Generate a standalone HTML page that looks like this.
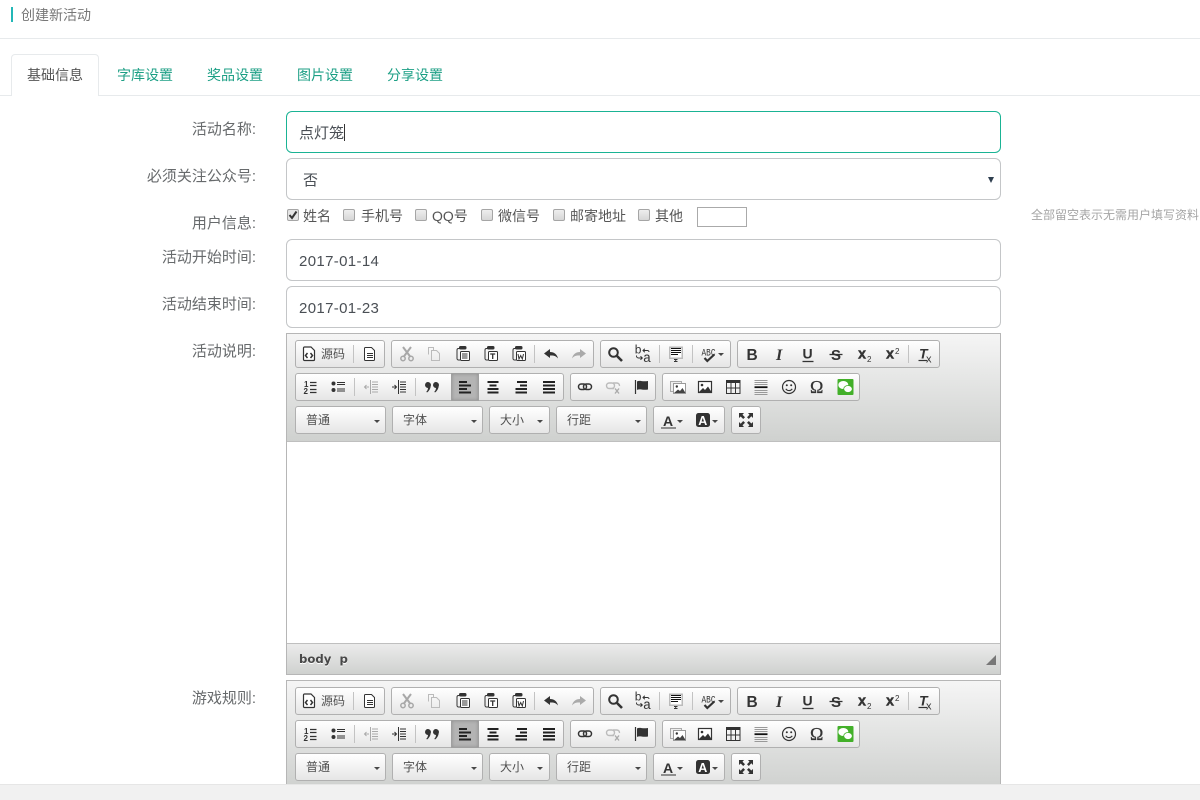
<!DOCTYPE html>
<html lang="zh">
<head>
<meta charset="utf-8">
<title>创建新活动</title>
<style>
html,body{margin:0;padding:0;width:1200px;height:800px;overflow:hidden;background:#fff}
body{position:relative;font-family:"Liberation Sans","Noto Sans CJK SC",sans-serif;font-size:14px;color:#676a6c}
#page{position:absolute;left:0;top:0;width:1200px;height:800px;overflow:hidden}
.t{position:absolute;white-space:nowrap;line-height:20px}
.l{position:absolute;left:56px;width:200px;text-align:right;white-space:nowrap;line-height:20px;color:#676a6c;font-size:15px}
.box{position:absolute;left:286px;width:715px;height:42px;box-sizing:border-box;border:1px solid #c4c6c8;border-radius:6px;background:#fff;color:#4a4f55;font-size:15px;line-height:43px;padding-left:12px;overflow:hidden}
.cb{position:absolute;width:12px;height:12px;box-sizing:border-box;border:1px solid #a5a5a5;border-radius:2px;background:linear-gradient(#eee,#d6d6d6);top:209px}
.tb{position:absolute;left:0;width:1200px;height:0}
.ed{position:absolute;left:286px;top:333px;width:715px;height:342px;box-sizing:border-box;border:1px solid #b6b6b6;background:#fff}
.e2{height:104px;border-bottom:0;overflow:hidden}
.top{position:absolute;left:0;top:0;width:713px;height:107px;background:linear-gradient(#f5f5f5,#cfd1cf);border-bottom:1px solid #bfbfbf}
.bot{position:absolute;left:0;top:309px;width:713px;height:31px;background:linear-gradient(#ebebeb,#cfd1cf);border-top:1px solid #bfbfbf;box-sizing:border-box}
.g{position:absolute;display:block;height:28px;box-sizing:border-box;border:1px solid #b0b0b0;border-radius:3px;background:linear-gradient(#fff,#e6e6e6)}
.a{position:absolute;left:451px;top:373px;width:28px;height:28px;box-sizing:border-box;background:#b4b4b4;border:1px solid #a0a0a0;box-shadow:inset 0 0 3px #8f8f8f}
.s{position:absolute;width:1px;height:18px;background:#c3c3c3}
.c{position:absolute;font-size:12px;line-height:20px;color:#505050;white-space:nowrap}
.ar{position:absolute;width:0;height:0;border:3px solid transparent;border-top-color:#474747;border-bottom:0}
.path{position:absolute;left:299px;top:651px;font-family:"DejaVu Sans",sans-serif;font-weight:bold;font-size:11.7px;line-height:16px;color:#484848;text-shadow:0 1px 0 #fff;white-space:pre}
svg.ic{position:absolute;left:0;top:0;overflow:hidden}
#foot{position:absolute;left:0;top:784px;width:1200px;height:16px;background:#f1f1f1;border-top:1px solid #e6e6e6;box-sizing:border-box;z-index:9}
</style>
</head>
<body>
<div id="page">

<svg width="0" height="0" style="position:absolute">
<defs>
<g id="clip"><rect x="4.500" y="0.500" width="6.500" height="2.500" rx="1" fill="#333"/><path d="M4.500 2.500H3.500A1.500 1.500 0 0 0 2 4v8.500A1.500 1.500 0 0 0 3.500 14H5" fill="none" stroke="#333"/><rect x="5.500" y="5.500" width="9" height="9" rx="1" fill="#fff" stroke="#333"/></g>
<g id="icons" fill="none" stroke="#333">
<g transform="translate(301,346)"><path d="M3.500 1h6.500l3.500 3.500v9a1 1 0 0 1-1 1h-9a1 1 0 0 1-1-1v-11.500a1 1 0 0 1 1-1z" fill="#fff" stroke-width="1.200"/><path d="M6.500 7 4.500 9.500l2 2.500M9.500 7l2 2.500-2 2.500" stroke-width="1.500"/></g>
<g transform="translate(362,346)"><path d="M3.500 1.500h6l3 3v9a1 1 0 0 1-1 1h-8a1 1 0 0 1-1-1v-11a1 1 0 0 1 1-1z" fill="#fff"/><path d="M5 7.500h6M5 9.500h6M5 11.500h6"/></g>
<g transform="translate(399,346)" stroke="#a8a8a8"><path d="M4 1l7.500 10M12 1 4.500 11" stroke-width="2"/><circle cx="4" cy="12.500" r="2.200" stroke-width="1.500"/><circle cx="12" cy="12.500" r="2.200" stroke-width="1.500"/></g>
<g transform="translate(426,346)" stroke="#bbb"><path d="M2.500 8.500v-7h5v3M5.500 4.500h5l3 3v7h-8z"/></g>
<g transform="translate(455,346)"><use href="#clip"/><path d="M7 8h5.500M7 10h5.500M7 12h5.500"/></g>
<g transform="translate(483,346)"><use href="#clip"/><path d="M7.200 8h5M9.700 8v5" stroke-width="1.300"/></g>
<g transform="translate(511,346)"><use href="#clip"/><path d="M7 8l1 5 1.700-3.500 1.600 3.500 1.200-5" stroke-width="1"/></g>
<path transform="translate(543,346)" d="M1 7.500 7 3v3c4 0 7 2 8 6.500-2-2.500-4-3.200-8-3V12z" fill="#333" stroke="none"/>
<path transform="translate(587,346) scale(-1,1)" d="M1 7.500 7 3v3c4 0 7 2 8 6.500-2-2.500-4-3.200-8-3V12z" fill="#aaa" stroke="none"/>
<g transform="translate(607,346)"><circle cx="6.500" cy="6.500" r="4.300" stroke-width="2"/><path d="M10 10l5 5" stroke-width="2.600"/></g>
<g transform="translate(635,346)"><text x="-0.500" y="7.500" font-family="Liberation Mono" font-size="12" fill="#333" stroke="none">b</text><text x="8" y="16" font-family="Liberation Mono" font-size="13.500" fill="#333" stroke="none">a</text><path d="M8 4.500h4.500a1.500 1.500 0 0 1 1.500 1.500M9.800 2.800 8 4.500l1.800 1.700M1.500 9.500v.5a2 2 0 0 0 2 2H7M5.500 10.300 7.300 12l-1.800 1.700"/></g>
<g transform="translate(668,346)"><rect x="1" y="0.500" width="14" height="12.500" fill="#bbb" stroke="none"/><rect x="2.500" y="2" width="11" height="9.500" fill="#fff" stroke="none"/><path d="M3 2.500h10M3 4.500h10M3 6.500h10M3 8.500h7" stroke="#111"/><path d="M6 13.500h3.500M7.700 13.500v2.300M6 15.500h3.500"/></g>
<g transform="translate(700,346)"><text x="1.500" y="9.500" font-family="Liberation Mono" font-size="10" fill="#333" stroke="none" textLength="14" lengthAdjust="spacingAndGlyphs">ABC</text><path d="M4.500 12l2.800 3 7-6.500" stroke-width="2.200"/></g>
<text x="746.500" y="360" font-family="Liberation Sans" font-weight="bold" font-size="15.500" fill="#333" stroke="none">B</text>
<text x="776" y="360" font-family="Liberation Serif" font-style="italic" font-weight="bold" font-size="16" fill="#333" stroke="none">I</text>
<text x="802.500" y="358.500" font-family="Liberation Sans" font-weight="bold" font-size="14" fill="#333" stroke="none">U</text><path d="M802.500 361.500h11" stroke-width="1.300"/>
<text x="831" y="360" font-family="Liberation Sans" font-weight="bold" font-size="15" fill="#333" stroke="none">S</text><path d="M829.500 354.500h13" stroke-width="1.300"/>
<text x="858" y="358.500" font-family="Liberation Sans" font-weight="bold" font-size="14.500" fill="#333" stroke="#333" stroke-width="0.400">x</text><text x="867" y="362" font-family="Liberation Sans" font-size="8" fill="#333" stroke="none">2</text>
<text x="886" y="358.500" font-family="Liberation Sans" font-weight="bold" font-size="14.500" fill="#333" stroke="#333" stroke-width="0.400">x</text><text x="895" y="354" font-family="Liberation Sans" font-size="8" fill="#333" stroke="none">2</text>
<text x="919" y="358.500" font-family="Liberation Sans" font-style="italic" font-weight="bold" font-size="14" fill="#333" stroke="none">T</text><path d="M918.500 360.500h8.500" stroke-width="1.200"/><text x="926" y="362.500" font-family="Liberation Sans" font-size="11" fill="#333" stroke="none">x</text>

<g transform="translate(302,379)"><text x="2" y="8" font-family="Liberation Sans" font-weight="bold" font-size="8" fill="#333" stroke="none">1</text><text x="1.500" y="15" font-family="Liberation Sans" font-weight="bold" font-size="8" fill="#333" stroke="none">2</text><path d="M8 3.500h6.500M8 6.500h6.500M8 10.500h6.500M8 13.500h6.500" stroke-width="1.200"/></g>
<g transform="translate(330,379)"><circle cx="3.500" cy="4.500" r="2" fill="#333" stroke="none"/><circle cx="3.500" cy="11" r="2" fill="#333" stroke="none"/><path d="M7 3.500h8M7 5.500h8M7 10h8M7 12h8" stroke-width="1.100"/></g>
<g transform="translate(363,379)" stroke="#aaa"><path d="M7.500 1v14M9 3h6M9 5.500h6M9 8h6M9 10.500h6M9 13h6M6 8H1.500M3.500 6 1.500 8l2 2"/></g>
<g transform="translate(391,379)"><path d="M7.500 1v14M9 3h6M9 5.500h6M9 8h6M9 10.500h6M9 13h6M1 8h4.500M3.500 6l2 2-2 2"/></g>
<g transform="translate(424,380)" fill="#333" stroke="none"><path d="M1 5a3 3 0 1 1 5.700 1.300c-.4 2.700-1.700 5-3.700 6.200l-.7-.7c1-1 1.500-2 1.700-3.800A3 3 0 0 1 1 5z"/><path d="M9 5a3 3 0 1 1 5.700 1.300c-.4 2.700-1.700 5-3.700 6.200l-.7-.7c1-1 1.500-2 1.700-3.800A3 3 0 0 1 9 5z"/></g>
<g stroke="#222" stroke-width="2"><path d="M459 382h8M459 385.500h12M459 389h8M459 392.500h12"/><path d="M487.500 382h11M489.500 385.500h7M487.500 389h11M487.500 392.500h11"/><path d="M517 382h10M520 385.500h7M515.500 389h11.500M515.500 392.500h11.500"/><path d="M543 382h12M543 385.500h12M543 389h12M543 392.500h12"/></g>
<g transform="translate(577,379)" stroke-width="1.500"><rect x="1.500" y="5" width="8" height="5.500" rx="2.700"/><rect x="6.500" y="5" width="8" height="5.500" rx="2.700"/></g>
<g transform="translate(605,379)" stroke="#bbb" stroke-width="1.400"><rect x="1.500" y="4" width="8" height="5.500" rx="2.700"/><path d="M8 4h4a2.700 2.700 0 0 1 2.500 3M7 9.500h2"/><path d="M10 9.500l4 5M14 9.500l-4 5" stroke="#aaa"/></g>
<g transform="translate(634,379)"><path d="M1.500 1v14" stroke-width="1.200"/><path d="M3 2.500c3-1.500 5 .5 11-.5v8.500c-5 1-8-1-11 .5z" fill="#333" stroke="none"/></g>
<g transform="translate(670,379)"><rect x="0.500" y="2.500" width="11" height="10" fill="#eee" stroke="#aaa"/><rect x="3.500" y="4.500" width="12" height="10" fill="#fff" stroke="#999"/><circle cx="6.800" cy="7.500" r="1.200" fill="#333" stroke="none"/><path d="M4 14l4-3.500 2 1.500 2.500-3 3 5z" fill="#444" stroke="none"/></g>
<g transform="translate(697,379)"><rect x="1.500" y="2.500" width="13" height="11" fill="#fff" stroke-width="1.200"/><circle cx="5" cy="6" r="1.300" fill="#333" stroke="none"/><path d="M2 13l4-4 2 2 3-3.500 3.500 5.500z" fill="#333" stroke="none"/></g>
<g transform="translate(725,379)"><rect x="1" y="1" width="14.500" height="2.800" fill="#333" stroke="none"/><path d="M1.500 3.500h13.500v11H1.500zM1.500 9h13.500M6 3.500v11M10.500 3.500v11"/></g>
<g transform="translate(753,379)"><path d="M1.500 1.500h13M1.500 3.500h13M1.500 5.500h13M1.500 11.500h13M1.500 13.500h13M1.500 15.500h13" stroke="#999"/><path d="M1.500 8.200h13" stroke="#111" stroke-width="1.800"/></g>
<g transform="translate(781,379)"><circle cx="8" cy="8" r="6.500" stroke-width="1.200"/><circle cx="5.800" cy="6.300" r="1" fill="#333" stroke="none"/><circle cx="10.200" cy="6.300" r="1" fill="#333" stroke="none"/><path d="M4.800 9.800c1.500 2.400 5 2.400 6.400 0" stroke-width="1.100"/></g>
<text x="810" y="393" font-family="Liberation Serif" font-size="18" fill="#333" stroke="#333" stroke-width="0.300">Ω</text>
<g transform="translate(837,379)"><rect x="0.500" y="0" width="16" height="16" rx="1" fill="#43b02a" stroke="none"/><ellipse cx="6.300" cy="6" rx="5" ry="4" fill="#fff" stroke="none"/><ellipse cx="11" cy="10" rx="4.300" ry="3.500" fill="#fff" stroke="#43b02a" stroke-width="0.800"/></g>

<text x="663" y="426" font-family="Liberation Sans" font-weight="bold" font-size="14" fill="#333" stroke="none">A</text><path d="M661 428h15" stroke="#777" stroke-width="1.600"/>
<rect x="696" y="413" width="14" height="14" rx="2.500" fill="#333" stroke="none"/><text x="698.200" y="425" font-family="Liberation Sans" font-weight="bold" font-size="12.500" fill="#fff" stroke="none">A</text>
<g transform="translate(738,412)" fill="#333" stroke="none"><path d="M1 1h5L4.500 2.700 7 5.200 5.200 7 2.700 4.500 1 6zM15 1v5l-1.700-1.700L10.800 7 9 5.200l2.500-2.500L10 1zM1 15v-5l1.700 1.700L5.200 9 7 10.800l-2.500 2.500L6 15zM15 15h-5l1.500-1.700L9 10.800 10.800 9l2.500 2.500L15 10z"/></g>
</g>
</defs>
</svg>

<!-- page header -->
<div style="position:absolute;left:11px;top:7px;width:2px;height:15px;background:#23b7b7"></div>
<div class="t" style="left:21px;top:5px;font-size:14px;color:#777">创建新活动</div>
<div style="position:absolute;left:0;top:38px;width:1200px;height:1px;background:#e7eaec"></div>

<!-- tabs -->
<div style="position:absolute;left:0;top:95px;width:1200px;height:1px;background:#e7eaec"></div>
<div style="position:absolute;left:11px;top:54px;width:88px;height:42px;box-sizing:border-box;border:1px solid #e7eaec;border-bottom:0;border-radius:4px 4px 0 0;background:#fff"></div>
<div class="t" style="left:27px;top:65px;color:#555">基础信息</div>
<div class="t" style="left:117px;top:65px;color:#1c9f85">字库设置</div>
<div class="t" style="left:207px;top:65px;color:#1c9f85">奖品设置</div>
<div class="t" style="left:297px;top:65px;color:#1c9f85">图片设置</div>
<div class="t" style="left:387px;top:65px;color:#1c9f85">分享设置</div>

<!-- form -->
<div class="l" style="top:120px">活动名称:</div>
<div class="box" style="top:111px;border-color:#1ab394">点灯笼<span style="display:inline-block;width:1px;height:17px;background:#333;vertical-align:-3px"></span></div>

<div class="l" style="top:167px">必须关注公众号:</div>
<div class="box" style="top:158px;padding-left:16px">否</div>
<div style="position:absolute;left:988px;top:177px;width:0;height:0;border:3.500px solid transparent;border-top:6px solid #2f3f4f;border-bottom:0"></div>

<div class="l" style="top:214px">用户信息:</div>
<div class="cb" style="left:287px;background:#e4e4e4"></div>
<svg width="12" height="12" style="position:absolute;left:287px;top:209px"><path d="M2.500 6l2.500 3 4.500-6.500" fill="none" stroke="#333" stroke-width="2"/></svg>
<div class="t" style="left:303px;top:206px;color:#555">姓名</div>
<div class="cb" style="left:343px"></div>
<div class="t" style="left:361px;top:206px;color:#555">手机号</div>
<div class="cb" style="left:415px"></div>
<div class="t" style="left:432px;top:206px;color:#555">QQ号</div>
<div class="cb" style="left:481px"></div>
<div class="t" style="left:498px;top:206px;color:#555">微信号</div>
<div class="cb" style="left:553px"></div>
<div class="t" style="left:570px;top:206px;color:#555">邮寄地址</div>
<div class="cb" style="left:638px"></div>
<div class="t" style="left:655px;top:206px;color:#555">其他</div>
<div style="position:absolute;left:697px;top:207px;width:50px;height:20px;box-sizing:border-box;border:1px solid #aaa"></div>
<div class="t" style="left:1031px;top:205px;font-size:12px;color:#a5a5a5">全部留空表示无需用户填写资料</div>

<div class="l" style="top:248px">活动开始时间:</div>
<div class="box" style="top:239px;letter-spacing:.35px">2017-01-14</div>
<div class="l" style="top:295px">活动结束时间:</div>
<div class="box" style="top:286px;letter-spacing:.35px">2017-01-23</div>

<div class="l" style="top:342px">活动说明:</div>
<div class="l" style="top:689px">游戏规则:</div>

<!-- editor 1 -->
<div class="tb" style="top:0">
<div class="ed"><div class="top"></div><div class="bot"></div></div>
<div class="g" style="left:295px;top:340px;width:90px"></div>
<div class="g" style="left:391px;top:340px;width:203px"></div>
<div class="g" style="left:600px;top:340px;width:131px"></div>
<div class="g" style="left:737px;top:340px;width:203px"></div>
<div class="g" style="left:295px;top:373px;width:269px"></div>
<div class="g" style="left:570px;top:373px;width:86px"></div>
<div class="g" style="left:662px;top:373px;width:198px"></div>
<div class="a"></div>
<div class="g" style="left:295px;top:406px;width:91px"></div>
<div class="g" style="left:392px;top:406px;width:91px"></div>
<div class="g" style="left:489px;top:406px;width:61px"></div>
<div class="g" style="left:556px;top:406px;width:91px"></div>
<div class="g" style="left:653px;top:406px;width:72px"></div>
<div class="g" style="left:731px;top:406px;width:30px"></div>
<div class="s" style="left:353px;top:345px"></div><div class="s" style="left:534px;top:345px"></div><div class="s" style="left:659px;top:345px"></div><div class="s" style="left:692px;top:345px"></div><div class="s" style="left:908px;top:345px"></div>
<div class="s" style="left:354px;top:378px"></div><div class="s" style="left:415px;top:378px"></div>
<div class="c" style="left:321px;top:344px">源码</div>
<div class="c" style="left:306px;top:410px">普通</div>
<div class="c" style="left:403px;top:410px">字体</div>
<div class="c" style="left:500px;top:410px">大小</div>
<div class="c" style="left:567px;top:410px">行距</div>
<div class="ar" style="left:374px;top:420px"></div><div class="ar" style="left:471px;top:420px"></div><div class="ar" style="left:537px;top:420px"></div><div class="ar" style="left:635px;top:420px"></div>
<div class="ar" style="left:718px;top:353px"></div><div class="ar" style="left:677px;top:420px"></div><div class="ar" style="left:712px;top:420px"></div>
<svg class="ic" width="1200" height="440"><use href="#icons"/></svg>
<div class="path">body  p</div>
<svg width="10" height="10" style="position:absolute;left:986px;top:655px"><path d="M10 0v10H0z" fill="#777"/></svg>
</div>

<!-- editor 2 -->
<div class="tb" style="top:347px">
<div class="ed e2"><div class="top"></div></div>
<div class="g" style="left:295px;top:340px;width:90px"></div>
<div class="g" style="left:391px;top:340px;width:203px"></div>
<div class="g" style="left:600px;top:340px;width:131px"></div>
<div class="g" style="left:737px;top:340px;width:203px"></div>
<div class="g" style="left:295px;top:373px;width:269px"></div>
<div class="g" style="left:570px;top:373px;width:86px"></div>
<div class="g" style="left:662px;top:373px;width:198px"></div>
<div class="a"></div>
<div class="g" style="left:295px;top:406px;width:91px"></div>
<div class="g" style="left:392px;top:406px;width:91px"></div>
<div class="g" style="left:489px;top:406px;width:61px"></div>
<div class="g" style="left:556px;top:406px;width:91px"></div>
<div class="g" style="left:653px;top:406px;width:72px"></div>
<div class="g" style="left:731px;top:406px;width:30px"></div>
<div class="s" style="left:353px;top:345px"></div><div class="s" style="left:534px;top:345px"></div><div class="s" style="left:659px;top:345px"></div><div class="s" style="left:692px;top:345px"></div><div class="s" style="left:908px;top:345px"></div>
<div class="s" style="left:354px;top:378px"></div><div class="s" style="left:415px;top:378px"></div>
<div class="c" style="left:321px;top:344px">源码</div>
<div class="c" style="left:306px;top:410px">普通</div>
<div class="c" style="left:403px;top:410px">字体</div>
<div class="c" style="left:500px;top:410px">大小</div>
<div class="c" style="left:567px;top:410px">行距</div>
<div class="ar" style="left:374px;top:420px"></div><div class="ar" style="left:471px;top:420px"></div><div class="ar" style="left:537px;top:420px"></div><div class="ar" style="left:635px;top:420px"></div>
<div class="ar" style="left:718px;top:353px"></div><div class="ar" style="left:677px;top:420px"></div><div class="ar" style="left:712px;top:420px"></div>
<svg class="ic" width="1200" height="437"><use href="#icons"/></svg>
</div>

<div id="foot"></div>
</div>
</body>
</html>
